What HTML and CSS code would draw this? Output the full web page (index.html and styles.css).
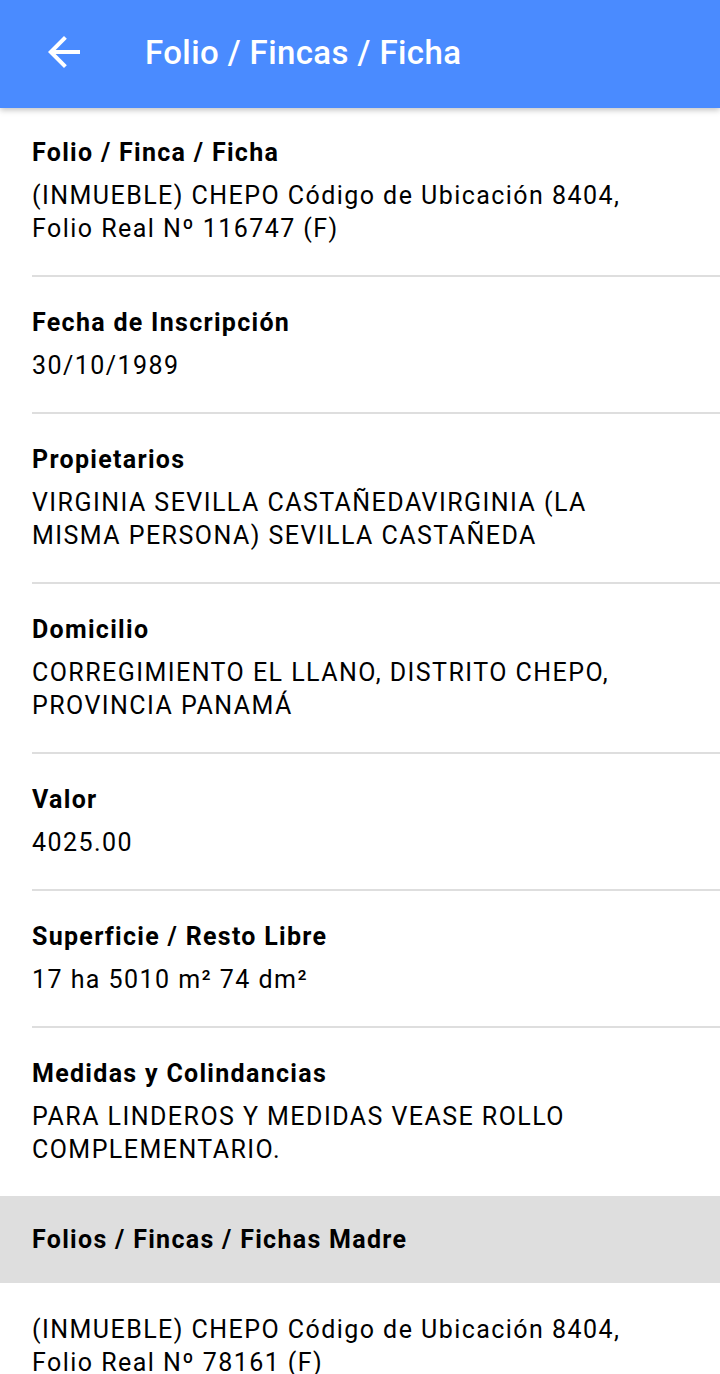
FILE: index.html
```html
<!DOCTYPE html>
<html lang="es">
<head>
<meta charset="utf-8">
<link rel="stylesheet" href="styles.css">
</head>
<body>
<header class="toolbar">
  <span class="back">
    <svg viewBox="0 0 24 24" width="48" height="48"><path fill="#fff" d="M20 11H7.83l5.59-5.59L12 4l-8 8 8 8 1.41-1.41L7.83 13H20v-2z"/></svg>
  </span>
  <h1 class="title">Folio / Fincas / Ficha</h1>
</header>
<main class="content">
  <section class="item">
    <div class="label">Folio / Finca / Ficha</div>
    <div class="value">(INMUEBLE) CHEPO Código de Ubicación 8404,<br>Folio Real Nº 116747 (F)</div>
  </section>
  <section class="item">
    <div class="label">Fecha de Inscripción</div>
    <div class="value">30/10/1989</div>
  </section>
  <section class="item">
    <div class="label">Propietarios</div>
    <div class="value">VIRGINIA SEVILLA CASTAÑEDAVIRGINIA (LA<br>MISMA PERSONA) SEVILLA CASTAÑEDA</div>
  </section>
  <section class="item">
    <div class="label">Domicilio</div>
    <div class="value">CORREGIMIENTO EL LLANO, DISTRITO CHEPO,<br>PROVINCIA PANAMÁ</div>
  </section>
  <section class="item">
    <div class="label">Valor</div>
    <div class="value">4025.00</div>
  </section>
  <section class="item">
    <div class="label">Superficie / Resto Libre</div>
    <div class="value">17 ha 5010 m² 74 dm²</div>
  </section>
  <section class="item last">
    <div class="label">Medidas y Colindancias</div>
    <div class="value">PARA LINDEROS Y MEDIDAS VEASE ROLLO<br>COMPLEMENTARIO.</div>
  </section>
  <div class="group">Folios / Fincas / Fichas Madre</div>
  <section class="entry">
    <div class="value">(INMUEBLE) CHEPO Código de Ubicación 8404,<br>Folio Real Nº 78161 (F)</div>
  </section>
</main>
</body>
</html>
```
FILE: styles.css
```css
html, body {
  margin: 0;
  padding: 0;
  background: #fff;
}
body {
  font-family: Roboto, "Noto Sans", sans-serif;
  color: #000;
  width: 720px;
  height: 1374px;
  overflow: hidden;
}
.toolbar {
  height: 108px;
  background: #4a8bff;
  display: flex;
  align-items: center;
  box-shadow: 0 2px 6px rgba(0,0,0,0.25);
  position: relative;
  z-index: 1;
}
.back {
  width: 48px;
  height: 48px;
  margin-left: 40px;
  margin-top: -4px;
  display: flex;
}
.title {
  margin: -4px 0 0 57px;
  font-size: 33px;
  font-weight: 500;
  letter-spacing: 0.4px;
  color: #fff;
}
.item {
  margin-left: 32px;
  padding: 29px 0 30px 0;
  border-bottom: 2px solid #dedede;
}
.item + .item {
  padding-top: 30px;
}
.item.last {
  border-bottom: none;
}
.label {
  font-size: 25px;
  font-weight: 700;
  letter-spacing: 1.3px;
  line-height: 32px;
  margin-bottom: 10px;
}
.value {
  font-size: 25px;
  letter-spacing: 1.45px;
  line-height: 33px;
}
.group {
  background: #dedede;
  height: 87px;
  display: flex;
  align-items: center;
  padding-left: 32px;
  font-size: 25px;
  font-weight: 700;
  letter-spacing: 1.3px;
}
.entry {
  padding: 30px 0 30px 32px;
}
```
